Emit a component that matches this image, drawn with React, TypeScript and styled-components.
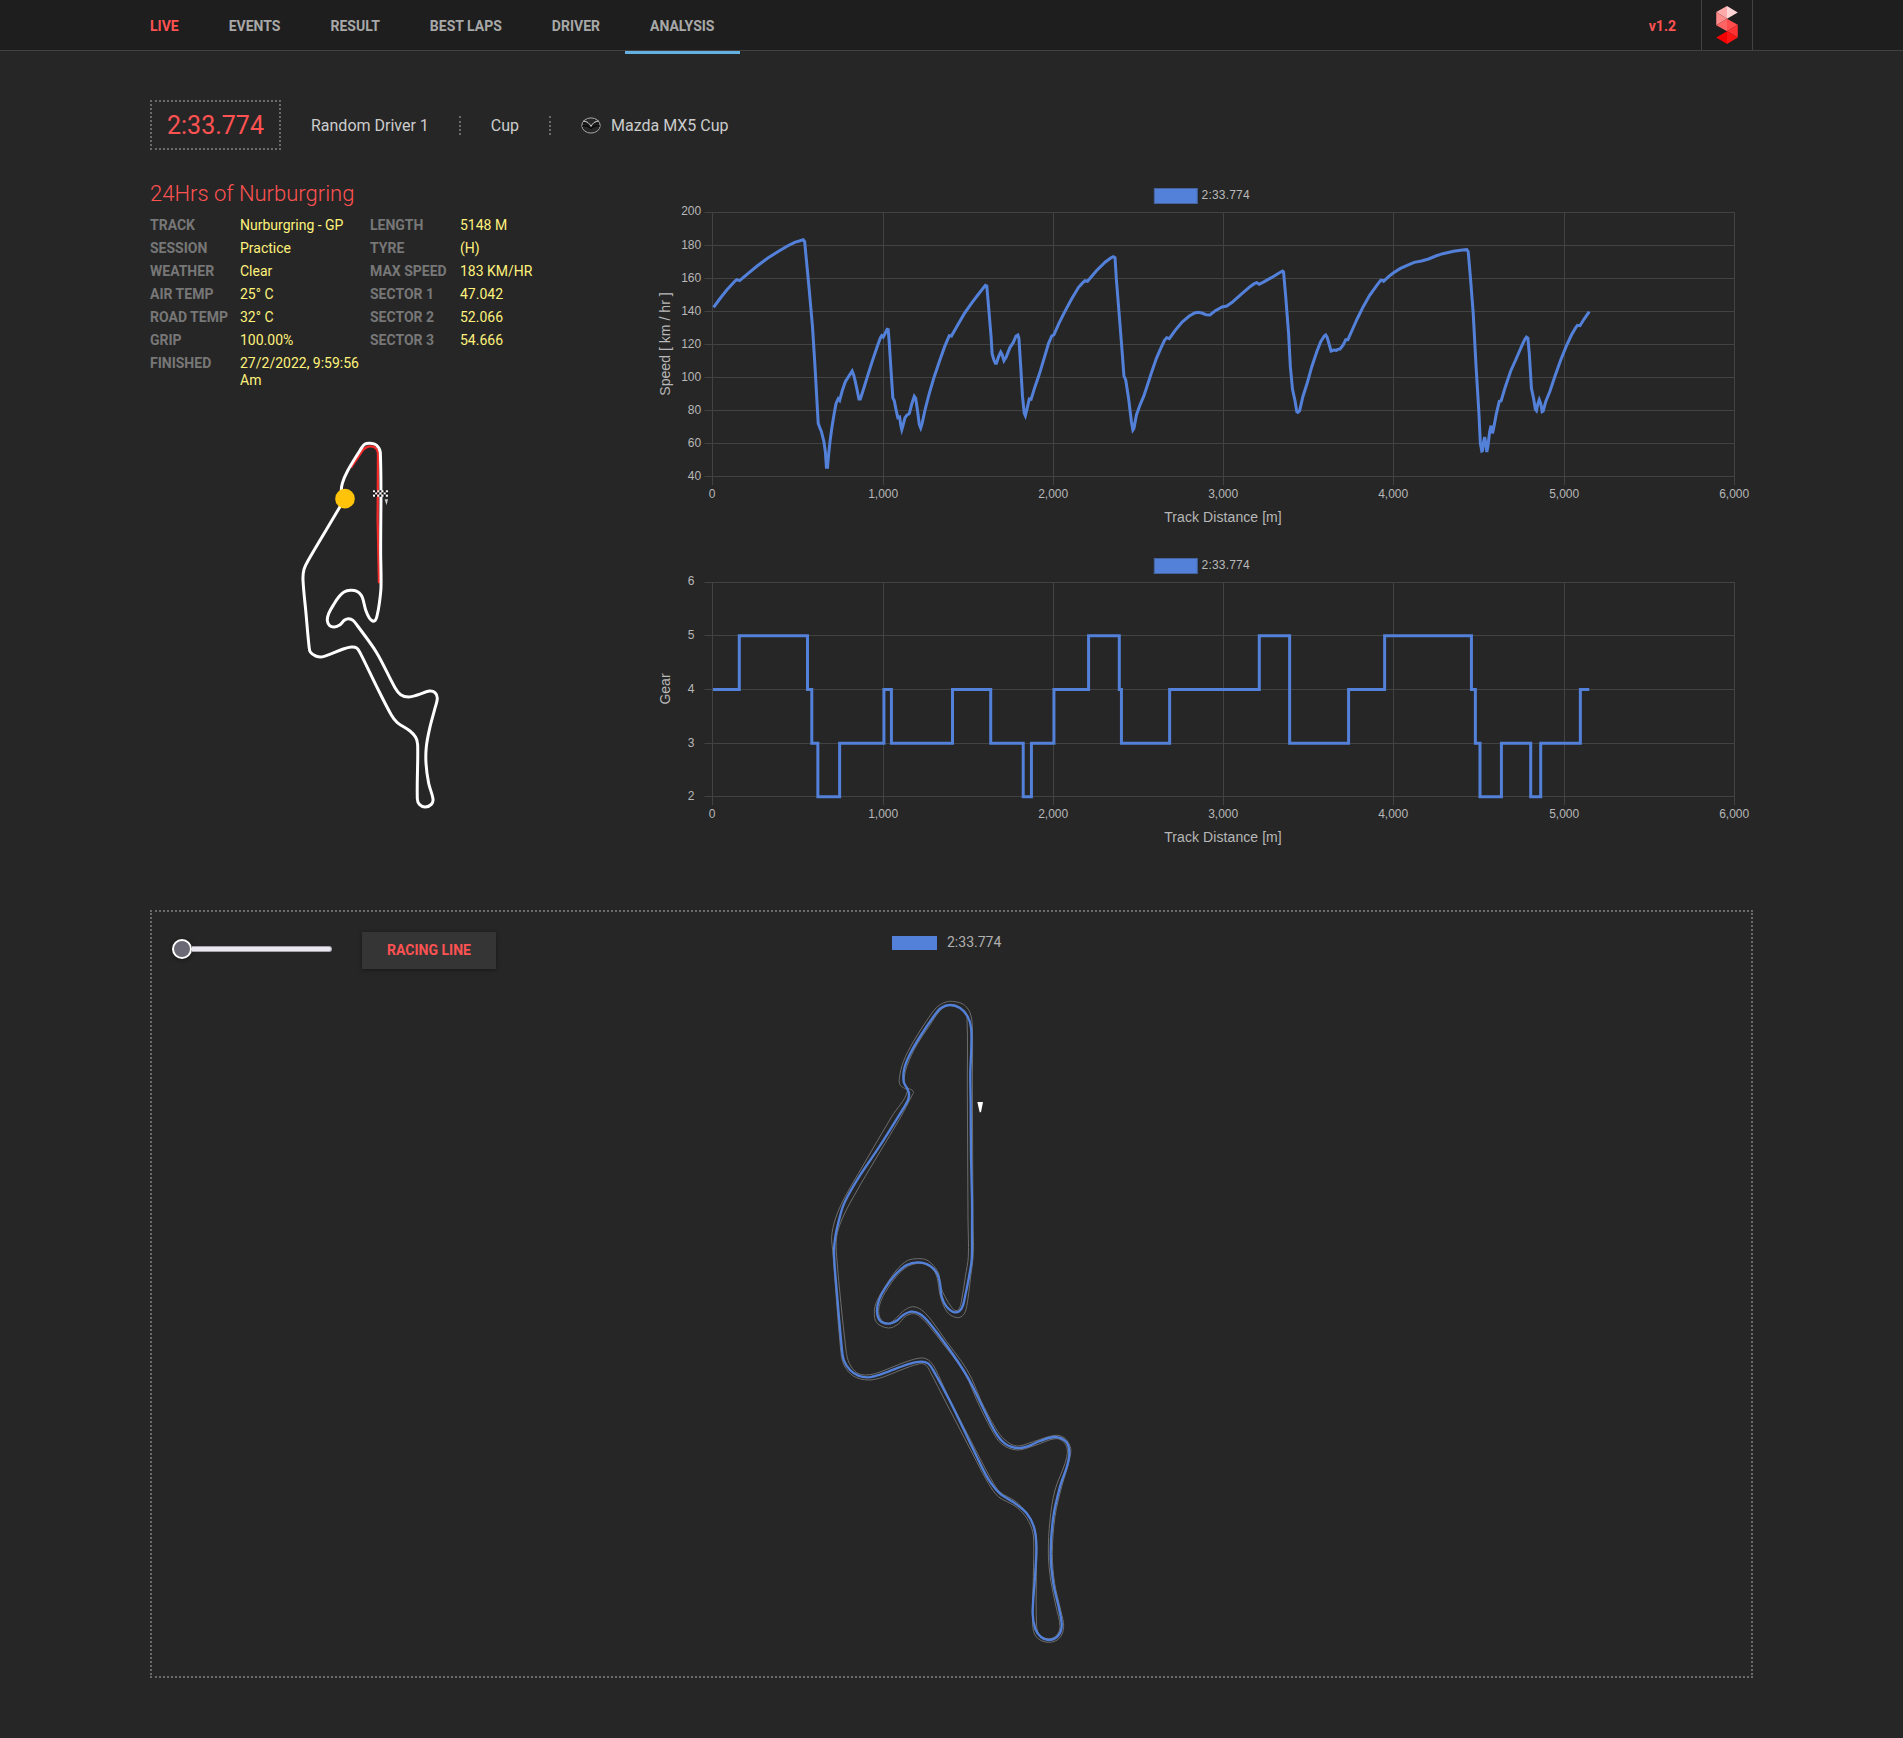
import React from "react";
import styled, { createGlobalStyle, css } from "styled-components";

const GlobalStyle = createGlobalStyle`
  * { box-sizing: border-box; }
  body {
    margin: 0;
    background: #262626;
    color: #cccccc;
    font-family: Roboto, "Liberation Sans", sans-serif;
    font-size: 14px;
  }
`;

const RED = "#ff5252";
const BLUE = "#5381d9";

/* ---------- layout ---------- */

const Page = styled.div`
  height: 1738px;
  overflow: hidden;
`;

const Header = styled.header`
  height: 51px;
  padding: 0 150px;
  display: flex;
  justify-content: space-between;
  background: #1e1e1e;
  border-bottom: 1px solid #424242;
`;

const Nav = styled.nav`
  display: flex;
  margin-left: -25px;
`;

const NavItem = styled.a<{ $live?: boolean; $active?: boolean }>`
  height: 54px;
  padding: 0 25px;
  line-height: 52px;
  font-weight: 700;
  color: ${(p) => (p.$live ? RED : "#a8a8a8")};
  ${(p) =>
    p.$active &&
    css`
      padding-right: 26px;
      border-bottom: 3px solid #64b0e0;
    `}
`;

const HeaderRight = styled.div`
  display: flex;
`;

const Version = styled.span`
  padding-right: 25px;
  line-height: 52px;
  font-weight: 700;
  color: ${RED};
`;

const LogoBox = styled.div`
  width: 52px;
  height: 50px;
  display: flex;
  align-items: center;
  justify-content: center;
  border: solid #424242;
  border-width: 0 1px;
`;

const Content = styled.main`
  padding: 49px 150px 0;
`;

const Summary = styled.section`
  display: flex;
  align-items: center;
  height: 50px;
`;

const LapTime = styled.div`
  height: 50px;
  padding: 0 15px;
  border: 2px dotted #6a6a6a;
  font-size: 25px;
  line-height: 48px;
  color: ${RED};
`;

const SummaryItem = styled.div<{ $divided?: boolean }>`
  display: flex;
  align-items: center;
  gap: 10px;
  padding: 0 30px;
  height: 19px;
  font-size: 16px;
  line-height: 19px;
  border-right: ${(p) => (p.$divided ? "2px dotted #6a6a6a" : "none")};
`;

const Columns = styled.section`
  display: flex;
  margin-top: 30px;
`;

const InfoColumn = styled.div`
  width: 500px;
  display: flex;
  flex-direction: column;
`;

const EventTitle = styled.h1`
  margin: 0;
  height: 37px;
  font-size: 22px;
  line-height: 28px;
  font-weight: 300;
  color: ${RED};
`;

const InfoGrid = styled.div`
  display: flex;
  height: 203px;
`;

const InfoList = styled.dl<{ $valueWidth: number }>`
  margin: 0;
  width: 220px;
  display: grid;
  grid-template-columns: 90px ${(p) => p.$valueWidth}px;
  align-content: start;
  row-gap: 6px;
  line-height: 17px;
`;

const InfoLabel = styled.dt`
  font-weight: 700;
  color: #777777;
  white-space: nowrap;
`;

const InfoValue = styled.dd`
  margin: 0;
  color: #fff27c;
`;

const MiniMap = styled.svg`
  margin-left: 130px;
`;

const ChartColumn = styled.div`
  display: flex;
  flex-direction: column;
  gap: 20px;
`;

const ChartSvg = styled.svg`
  display: block;
  overflow: visible;
  font-family: "Liberation Sans", Arial, sans-serif;
`;

const RacingPanel = styled.section`
  margin-top: 50px;
  height: 768px;
  border: 2px dotted #6a6a6a;
  padding: 20px;
`;

const PanelBar = styled.div`
  display: flex;
  align-items: flex-start;
  height: 37px;
`;

const Slider = styled.div`
  width: 160px;
  height: 34px;
  display: flex;
  align-items: center;
`;

const SliderThumb = styled.span`
  width: 20px;
  height: 20px;
  border-radius: 50%;
  background: #6b6975;
  border: 2px solid #ffffff;
  box-shadow: 0 1px 4px rgba(0, 0, 0, 0.4);
`;

const SliderTrack = styled.span`
  width: 140px;
  height: 6px;
  border: 1px solid #a5a2ad;
  border-left: none;
  border-radius: 0 3px 3px 0;
  background: #eae8ee;
`;

const ToggleButton = styled.button`
  margin-left: 30px;
  width: 134px;
  height: 37px;
  padding: 0 0 2px;
  border: none;
  background: #353535;
  box-shadow: 0 1px 4px rgba(0, 0, 0, 0.4);
  font: 700 14px Roboto, sans-serif;
  color: ${RED};
`;

const PanelLegend = styled.div`
  display: flex;
  align-items: center;
  gap: 10px;
  margin-left: 396px;
  height: 22px;
  line-height: 20px;
  color: #b0b0b0;
`;

const LegendSwatch = styled.span`
  width: 45px;
  height: 14px;
  background: ${BLUE};
`;

const LegendText = styled.span`
  height: 22px;
`;

const RacingMap = styled.svg`
  display: block;
  margin: 21px 0 0 648px;
`;

/* ---------- helpers ---------- */

type Pt = [number, number];

function parse(data: string): Pt[] {
  return data
    .trim()
    .split(/\s+/)
    .map((p) => p.split(",").map(Number) as Pt);
}

/* Closed spline through the points. */
function smooth(data: string): string {
  const p = parse(data);
  const n = p.length;
  const at = (i: number): Pt => p[(i + n) % n];
  let d = `M${p[0][0]} ${p[0][1]}`;
  for (let i = 0; i < n; i++) {
    const [a, b, c, e] = [at(i - 1), at(i), at(i + 1), at(i + 2)];
    const len = Math.hypot(c[0] - b[0], c[1] - b[1]);
    const tangent = (u: Pt, w: Pt): Pt => {
      const l = Math.hypot(w[0] - u[0], w[1] - u[1]) || 1;
      return [((w[0] - u[0]) / l) * (len / 3), ((w[1] - u[1]) / l) * (len / 3)];
    };
    const t1 = tangent(a, c);
    const t2 = tangent(b, e);
    d += `C${(b[0] + t1[0]).toFixed(1)} ${(b[1] + t1[1]).toFixed(1)} ${(c[0] - t2[0]).toFixed(1)} ${(c[1] - t2[1]).toFixed(1)} ${c[0]} ${c[1]}`;
  }
  return d + "Z";
}

/* ---------- data ---------- */

const SPEED_TRACE = `178,382 195,357 215,330 238,303 243,299 251,302 275,280 300,258 330,234 360,214 385,198 405,187 418,183 429,179 433,185
437,230 445,320 455,440 462,560 471,730 475,742 480,755 487,785 491,815 494,862 497,862 500,825 504,785 509,745 515,705 521,670 527,656 531,661
538,633 547,605 557,588 566,573 571,587 578,620 585,657 589,657 598,627 608,592 622,545 637,497 645,474 649,467 653,471 658,461 664,448 667,449
670,490 676,590 680,654 684,662 690,695 694,713 699,711 702,735 705,749 708,738 714,713 720,705 726,701 733,672 740,649 744,655 750,700 754,733
758,744 762,730 770,690 782,640 795,593 810,545 825,500 838,467 844,468 860,438 880,401 900,370 920,342 939,316 943,318 948,380 955,470 958,522
963,540 967,550 970,550 976,530 982,516 986,524 991,542 997,532 1008,502 1017,488 1025,468 1030,465 1033,475 1038,560 1043,650 1048,700 1051,707
1055,690 1062,657 1067,658 1078,620 1090,583 1105,530 1116,490 1125,468 1131,464 1145,430 1160,398 1180,358 1200,322 1212,308 1218,302 1225,304
1250,272 1275,246 1290,234 1297,230 1302,233 1306,300 1315,420 1323,530 1327,588 1332,600 1340,655 1348,725 1352,750 1355,745 1362,705 1372,675
1382,650 1392,618 1405,575 1418,535 1430,505 1441,480 1447,473 1454,476 1470,452 1490,426 1510,408 1525,399 1535,397 1545,399 1557,404 1568,405
1583,392 1602,381 1615,378 1630,367 1655,343 1680,320 1692,311 1699,308 1706,313 1720,305 1740,293 1758,281 1771,273 1774,276 1780,350 1788,460
1793,560 1799,628 1806,662 1811,695 1814,697 1819,692 1828,650 1840,610 1853,560 1867,515 1878,485 1888,468 1892,465 1896,472 1903,498 1907,513
1915,510 1922,511 1926,508 1932,507 1941,495 1948,479 1954,479 1965,453 1980,417 1997,380 2015,346 2035,316 2046,301 2050,301 2054,304 2068,290
2080,280 2100,266 2120,256 2140,247 2160,243 2180,237 2200,228 2220,221 2250,214 2275,210 2287,209 2291,215 2297,290 2305,400 2313,560 2321,700
2325,790 2329,813 2331,812 2334,785 2337,771 2340,790 2343,816 2346,800 2351,755 2355,737 2359,760 2363,740 2370,700 2378,664 2383,663 2395,620
2410,573 2425,537 2440,500 2449,479 2454,471 2458,474 2462,520 2468,625 2474,655 2479,688 2482,692 2486,672 2490,659 2494,670 2498,695 2501,693
2508,665 2520,633 2535,585 2550,540 2565,500 2580,465 2592,443 2597,436 2604,437 2615,418 2630,395`;

const GEAR_Y: Record<number, number> = { 2: 740, 3: 579.5, 4: 418.5, 5: 257 };
const GEAR_CHANGES: Pt[] = [
  [176, 4], [250, 5], [441, 4], [453, 3], [470, 2], [531, 3], [655, 4], [676, 3], [847, 4], [954, 3],
  [1045, 2], [1068, 3], [1131, 4], [1228, 5], [1314, 4], [1320, 3], [1455, 4], [1706, 5], [1791, 3],
  [1956, 4], [2057, 5], [2300, 4], [2311, 3], [2324, 2], [2384, 3], [2466, 2], [2494, 3], [2605, 4],
];
const GEAR_TRACE =
  GEAR_CHANGES.map(([x, g], i) => {
    const prev = i ? `${x},${GEAR_Y[GEAR_CHANGES[i - 1][1]]} ` : "";
    return `${prev}${x},${GEAR_Y[g]}`;
  }).join(" ") + ` 2630,${GEAR_Y[4]}`;

const RACING_LINE = `452,340 451,250 454,170 453,112 442,78 420,54 390,45 363,54 342,78 305,132 270,192 253,235 251,275 261,295 267,311 264,330 250,355
178,470 120,556 90,606 70,646 57,690 46,740 42,790 50,900 66,1080 72,1112 90,1140 115,1157 145,1162 180,1154 235,1133 270,1121 303,1115 325,1121
342,1145 388,1230 415,1285 480,1420 508,1472 540,1511 585,1540 620,1570 642,1612 649,1670 645,1760 638,1870 646,1917 663,1941 685,1950 712,1940
725,1910 718,1860 700,1780 692,1690 700,1580 720,1490 742,1425 748,1385 738,1355 705,1341 660,1353 620,1370 590,1374 555,1361 525,1325 485,1245
445,1165 400,1095 360,1040 325,995 300,972 275,965 250,975 230,992 205,1001 180,992 171,965 177,930 195,895 225,855 260,825 295,817 330,827
352,852 360,880 365,920 380,950 405,967 425,955 435,920 447,860 455,810 456,730 456,630 453,500`;

const TRACK_LEFT = `457,110 457,300 459,690 460,790 452,860 440,950 430,975 412,983 385,970 368,940 358,905 353,870 342,842 320,825 295,820 262,830
230,858 200,900 182,935 176,965 184,990 205,1000 228,985 250,963 278,950 305,960 335,992 380,1055 425,1115 455,1165 482,1230 527,1315 555,1350
590,1368 640,1355 705,1336 735,1345 752,1375 750,1400 740,1440 725,1490 705,1580 697,1690 704,1780 722,1860 731,1910 718,1945 685,1957 650,1942
638,1905 640,1760 641,1650 635,1615 615,1577 585,1548 535,1520 505,1480 470,1415 374,1230 333,1150 318,1126 300,1121 240,1141 190,1161 145,1170
100,1158 72,1125 62,1080 38,780 35,740 45,690 70,630 130,525 215,380 262,305 241,286 238,265 250,215 280,155 320,92 350,52 375,37 397,34 430,43 450,68`;

const TRACK_RIGHT = `442,300 444,690 445,800 436,860 425,930 418,955 408,962 395,952 375,920 362,890 357,855 345,832 320,810 293,806 262,812 230,840
195,890 170,935 163,965 170,998 205,1014 235,1002 255,980 280,971 300,980 325,1005 372,1065 418,1125 447,1175 470,1230 515,1320 545,1362 590,1380
640,1368 705,1346 730,1355 742,1380 735,1420 705,1500 690,1590 685,1690 692,1770 708,1850 720,1910 708,1938 685,1946 660,1936 650,1910 649,1760
650,1650 642,1610 620,1568 585,1533 540,1506 515,1470 480,1405 385,1220 345,1135 325,1110 300,1104 240,1122 180,1146 140,1155 110,1148 88,1120
78,1080 50,800 50,740 65,690 95,630 150,535 240,385 275,318 280,304 258,290 253,265 262,225 290,165 330,105 360,62 385,46 410,47 432,62 441,85`;

const MINI_TRACK = `301,98 302,400 303,500 298,550 291,588 286,601 278,603 268,594 257,570 250,542 244,526 231,514 211,511 192,516 178,529 162,552
146,581 142,602 149,617 163,621 179,615 194,600 206,596 219,601 233,618 290,698 345,803 362,824 386,831 412,825 448,813 465,818 472,835 464,868
449,925 439,980 438,1030 446,1090 459,1137 454,1153 436,1161 419,1154 412,1137 413,975 407,952 390,933 352,908 334,885 290,800 240,698 230,684
214,681 190,687 130,710 107,708 91,696 87,678 78,580 69,480 72,448 84,422 179,262 192,238 184,220 187,190 203,152 242,88 254,73 270,70 289,75`;

/* ---------- drawings ---------- */

const Logo = () => (
  <svg width="22" height="38" viewBox="0 0 64 113">
    <path d="M32 0 64 19 32 38z" fill="#ffd4d4" />
    <path d="M32 0v38L0 18z" fill="#ffabab" />
    <path d="M0 18 32 38 0 57z" fill="#ff8b8b" />
    <path d="M32 38v37L0 57z" fill="#ff6464" />
    <path d="M32 38 64 56 32 75z" fill="#ff4c4c" />
    <path d="M64 56v38L32 75z" fill="#ff3333" />
    <path d="M32 75 64 94 32 113z" fill="#ff1414" />
    <path d="M32 75v38L0 94z" fill="#f40000" />
  </svg>
);

const MazdaIcon = () => (
  <svg width="20" height="17" viewBox="0 0 20 17" fill="none">
    <ellipse cx="10" cy="8.5" rx="9.2" ry="7.6" stroke="#a8a8a8" strokeWidth="1" />
    <path d="M2.4 4C6 4.3 8.6 6.2 10 9.6 11.4 6.2 14 4.3 17.6 4" stroke="#d0d0d0" strokeWidth="1" />
    <path d="M1.4 9.5C3.5 8 6.5 8.5 10 11.4 13.5 8.5 16.5 8 18.6 9.5" stroke="#050505" strokeWidth="1.2" />
    <path d="M2 6.4C4.5 5.6 7.5 7.4 9.2 9.8M18 6.4C15.5 5.6 12.5 7.4 10.8 9.8" stroke="#0a0a0a" strokeWidth="0.8" />
  </svg>
);

interface ChartProps {
  height: number;
  title: string;
  titleLength?: number;
  ticks: number[];
  tickY: number[];
  labelX: number;
  trace: string;
}

const LABEL = "#b8b8b8";
const GRID = "#424242";

const Chart = ({ height, title, titleLength, ticks, tickY, labelX, trace }: ChartProps) => {
  const bottom = tickY[tickY.length - 1];
  const columns = [62.5, 233.5, 403.5, 573.5, 743.5, 914.5, 1084.5];
  return (
    <ChartSvg width="1103" height={height} fontSize="12" fill={LABEL}>
      <rect x="504.3" y="8.5" width="43" height="15" fill={BLUE} stroke="#45649f" />
      <text x="551.6" y="19" textLength="48">2:33.774</text>
      {tickY.map((y, i) => (
        <React.Fragment key={y}>
          <path d={`M54.5 ${y}H1084.5`} stroke={GRID} />
          <text x={labelX} y={y + (i === 0 ? 2.5 : 3.5)} textAnchor="end">
            {ticks[i]}
          </text>
        </React.Fragment>
      ))}
      {columns.map((x, i) => (
        <React.Fragment key={x}>
          <path d={`M${x} 32V${bottom + 8.5}`} stroke={GRID} />
          <text x={x - 0.3} y={bottom + 21.5} textAnchor="middle">
            {(i * 1000).toLocaleString("en-US")}
          </text>
        </React.Fragment>
      ))}
      <text x="573" y={bottom + 45.5} fontSize="14" textAnchor="middle" textLength="117.5">
        Track Distance [m]
      </text>
      <text
        transform={`translate(20 ${(tickY[0] + bottom) / 2 - 0.5}) rotate(-90)`}
        fontSize="14"
        textAnchor="middle"
        textLength={titleLength}
      >
        {title}
      </text>
      <polyline
        points={trace}
        transform="scale(0.357143 0.333333)"
        fill="none"
        stroke={BLUE}
        strokeWidth="3"
        vectorEffect="non-scaling-stroke"
      />
    </ChartSvg>
  );
};

const FLAG_CELL = 6.4;

const TrackMap = () => (
  <MiniMap width="180" height="400" viewBox="0 0 540 1200" fill="none">
    <path d="M213 143 246 94C256 80 264 79 272 79 286 79 294 88 294 104L293 300 297 490" stroke="#f22b2b" strokeWidth="7" />
    <path d={smooth(MINI_TRACK)} stroke="#ffffff" strokeWidth="9" />
    {[0, 1, 2].map((row) =>
      [0, 1, 2, 3, 4, 5, 6].map((col) => (
        <rect
          key={`${row}-${col}`}
          x={279 + col * FLAG_CELL}
          y={211 + row * FLAG_CELL}
          width={FLAG_CELL}
          height={FLAG_CELL}
          fill={(row + col) % 2 ? "#0c0c0c" : "#ffffff"}
        />
      ))
    )}
    <path d="M314 238h10l-4 16h-1z" fill="#cccccc" />
    <circle cx="195" cy="236" r="29.5" fill="#ffc40a" />
  </MiniMap>
);

const RacingLineMap = () => (
  <RacingMap width="270" height="670" viewBox="0 0 810 2010" fill="none">
    <path d={smooth(TRACK_LEFT)} stroke="#6c6c6c" strokeWidth="3" />
    <path d={smooth(TRACK_RIGHT)} stroke="#6c6c6c" strokeWidth="3" />
    <path d={smooth(RACING_LINE)} stroke={BLUE} strokeWidth="7" />
    <path d="M472 336h17l-6 31h-4z" fill="#ffffff" />
  </RacingMap>
);

/* ---------- page ---------- */

const NAV = ["LIVE", "EVENTS", "RESULT", "BEST LAPS", "DRIVER", "ANALYSIS"];

const SESSION_INFO = [
  ["TRACK", "Nurburgring - GP"],
  ["SESSION", "Practice"],
  ["WEATHER", "Clear"],
  ["AIR TEMP", "25° C"],
  ["ROAD TEMP", "32° C"],
  ["GRIP", "100.00%"],
  ["FINISHED", "27/2/2022, 9:59:56 Am"],
];

const LAP_INFO = [
  ["LENGTH", "5148 M"],
  ["TYRE", "(H)"],
  ["MAX SPEED", "183 KM/HR"],
  ["SECTOR 1", "47.042"],
  ["SECTOR 2", "52.066"],
  ["SECTOR 3", "54.666"],
];

const Info = ({ rows, valueWidth }: { rows: string[][]; valueWidth: number }) => (
  <InfoList $valueWidth={valueWidth}>
    {rows.map(([label, value]) => (
      <React.Fragment key={label}>
        <InfoLabel>{label}</InfoLabel>
        <InfoValue>{value}</InfoValue>
      </React.Fragment>
    ))}
  </InfoList>
);

export default function App() {
  return (
    <Page>
      <GlobalStyle />
      <Header>
        <Nav>
          {NAV.map((name) => (
            <NavItem key={name} $live={name === "LIVE"} $active={name === "ANALYSIS"}>
              {name}
            </NavItem>
          ))}
        </Nav>
        <HeaderRight>
          <Version>v1.2</Version>
          <LogoBox>
            <Logo />
          </LogoBox>
        </HeaderRight>
      </Header>
      <Content>
        <Summary>
          <LapTime>2:33.774</LapTime>
          <SummaryItem $divided>Random Driver 1</SummaryItem>
          <SummaryItem $divided>Cup</SummaryItem>
          <SummaryItem>
            <MazdaIcon />
            Mazda MX5 Cup
          </SummaryItem>
        </Summary>
        <Columns>
          <InfoColumn>
            <EventTitle>24Hrs of Nurburgring</EventTitle>
            <InfoGrid>
              <Info rows={SESSION_INFO} valueWidth={125} />
              <Info rows={LAP_INFO} valueWidth={120} />
            </InfoGrid>
            <TrackMap />
          </InfoColumn>
          <ChartColumn>
            <Chart
              height={350}
              title="Speed [ km / hr ]"
              titleLength={103.5}
              ticks={[200, 180, 160, 140, 120, 100, 80, 60, 40]}
              tickY={[32.5, 65.5, 98.5, 131.5, 164.5, 197.5, 230.5, 263.5, 296.5]}
              labelX={51.2}
              trace={SPEED_TRACE}
            />
            <Chart
              height={310}
              title="Gear"
              ticks={[6, 5, 4, 3, 2]}
              tickY={[32.5, 85.5, 139.5, 193.5, 246.5]}
              labelX={44.5}
              trace={GEAR_TRACE}
            />
          </ChartColumn>
        </Columns>
        <RacingPanel>
          <PanelBar>
            <Slider>
              <SliderThumb />
              <SliderTrack />
            </Slider>
            <ToggleButton>RACING LINE</ToggleButton>
            <PanelLegend>
              <LegendSwatch />
              <LegendText>2:33.774</LegendText>
            </PanelLegend>
          </PanelBar>
          <RacingLineMap />
        </RacingPanel>
      </Content>
    </Page>
  );
}
